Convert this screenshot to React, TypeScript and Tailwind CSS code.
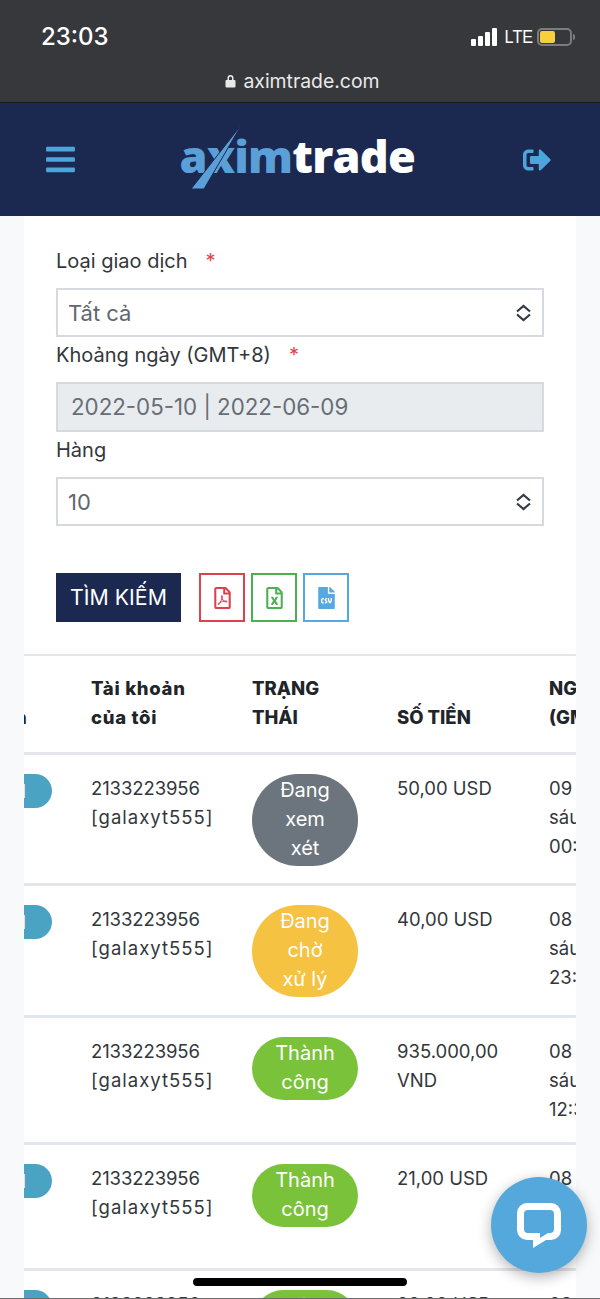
import { FaBars, FaFileCsv, FaRegFileExcel, FaRegFilePdf, FaSignOutAlt } from "react-icons/fa";

const rows = [
  { side: true, status: ["Đang", "xem", "xét"], color: "bg-[#6c757d]", amount: ["50,00 USD"], date: ["09 tháng", "sáu 2022", "00:12:41"], pad: "pb-[17px]" },
  { side: true, status: ["Đang", "chờ", "xử lý"], color: "bg-[#f5c242]", amount: ["40,00 USD"], date: ["08 tháng", "sáu 2022", "23:40:09"], pad: "pb-[18px]" },
  { side: false, status: ["Thành", "công"], color: "bg-[#7ac239]", amount: ["935.000,00", "VND"], date: ["08 tháng", "sáu 2022", "12:31:15"], pad: "pb-[18px]" },
  { side: true, status: ["Thành", "công"], color: "bg-[#7ac239]", amount: ["21,00 USD"], date: ["08 tháng", "sáu 2022", "10:05:33"], pad: "pb-[17px]" },
  { side: true, status: ["Thành", "công"], color: "bg-[#7ac239]", amount: ["20,00 USD"], date: ["08 tháng", "sáu 2022", "09:12:20"], pad: "pb-[17px]" },
];

const gridCols = "grid grid-cols-[67px_161px_145px_152px_100px]";

const StatusBar = () => (
  <div className="h-[103px] bg-[#37383c] border-b border-[#1a1a1c] flex flex-col text-white">
    <div className="flex items-center justify-between pt-[21px] pl-[41px] pr-[25px]">
      <span className="text-[24px] leading-[32px] font-medium">23:03</span>
      <div className="flex items-center">
        <div className="flex items-end gap-[2px] h-[18px]">
          <div className="w-[5px] h-[7px] bg-white rounded-[1px]"></div>
          <div className="w-[5px] h-[10px] bg-white rounded-[1px]"></div>
          <div className="w-[5px] h-[14px] bg-white rounded-[1px]"></div>
          <div className="w-[5px] h-[18px] bg-white rounded-[1px]"></div>
        </div>
        <span className="ml-[6px] text-[18px] leading-[18px] font-['Liberation_Sans',sans-serif] scale-x-90">LTE</span>
        <div className="ml-[2px] w-[35px] h-[18px] border-2 border-[#7b7c80] rounded-[5px] p-[1px]">
          <div className="w-[15px] h-full bg-[#f7d13d] rounded-[2px]"></div>
        </div>
        <div className="ml-[1px] w-[2px] h-[6px] bg-[#7b7c80] rounded-r-[2px]"></div>
      </div>
    </div>
    <div className="flex items-center justify-center mt-[16px] pl-[5px] gap-[7px] text-[#e9e9ea]">
      <svg width="11" height="14" viewBox="0 0 11 14" fill="currentColor">
        <path d="M2.5 6V4a3 3 0 0 1 6 0v2h1a1 1 0 0 1 1 1v5.5a1 1 0 0 1-1 1h-8a1 1 0 0 1-1-1V7a1 1 0 0 1 1-1zM4 6h3V4a1.5 1.5 0 0 0-3 0z" />
      </svg>
      <span className="text-[19.4px] leading-[24px]">aximtrade.com</span>
    </div>
  </div>
);

const Logo = () => (
  <div className="relative w-[236px] h-[66px]">
    <div className="absolute left-0 top-0 font-['Open_Sans',sans-serif] font-extrabold text-[45px] leading-[64px] tracking-[-0.8px] whitespace-nowrap">
      <span className="text-[#5a9fd8]">axim</span>
      <span className="text-white">trade</span>
    </div>
    <svg className="absolute left-0 top-0" width="80" height="66" viewBox="0 0 80 66">
      <path d="M62 0 L24 65 L11 65 Z" fill="#5a9fd8" stroke="#1b2850" strokeWidth="1" />
    </svg>
  </div>
);

const Header = () => (
  <div className="h-[113px] bg-[#1b2850] flex items-center justify-between pl-[46px] pr-[47px]">
    <FaBars className="text-[#4ea5dc] w-[29px] h-[33px]" />
    <div className="mt-[-6px] -ml-[1px]">
      <Logo />
    </div>
    <FaSignOutAlt className="text-[#4ea5dc] w-[32px] h-[28px]" />
  </div>
);

const Label = ({ text, star }: { text: string; star?: boolean }) => (
  <div className="pt-[1px] h-[29px] text-[20px] leading-[29px] text-[#33373b]">
    {text}
    {star && <span className="ml-[18px] text-[#e2424f]">*</span>}
  </div>
);

const SelectBox = ({ value }: { value: string }) => (
  <div className="h-[49px] border-2 border-[#d6d9dd] bg-white flex items-center justify-between pl-[10px] pr-[10px]">
    <span className="pt-[1px] text-[22px] text-[#5f676f]">{value}</span>
    <svg width="17" height="18" viewBox="0 0 17 18" fill="none" stroke="#343a40" strokeWidth="2.2">
      <path d="M2 7.5 L8.5 2 L15 7.5" />
      <path d="M2 10.5 L8.5 16 L15 10.5" />
    </svg>
  </div>
);

const Filters = () => (
  <div className="px-[32px] pt-[30px]">
    <Label text="Loại giao dịch" star />
    <div className="mt-[13px]">
      <SelectBox value="Tất cả" />
    </div>
    <div className="mt-[3px]">
      <Label text="Khoảng ngày (GMT+8)" star />
    </div>
    <div className="mt-[13px] h-[50px] border-2 border-[#d6d9dd] bg-[#e9ecef] flex items-center pl-[13px] text-[22.3px] text-[#666e76]">
      2022-05-10 | 2022-06-09
    </div>
    <div className="mt-[3px]">
      <Label text="Hàng" />
    </div>
    <div className="mt-[13px]">
      <SelectBox value="10" />
    </div>
    <div className="mt-[47px] flex items-center">
      <button className="w-[125px] h-[49px] bg-[#1b2850] text-white text-[21.3px]">TÌM KIẾM</button>
      <div className="ml-[18px] w-[46px] h-[49px] border-2 border-[#d9434e] flex items-center justify-center">
        <FaRegFilePdf className="text-[#d9434e] w-[17px] h-[22px]" />
      </div>
      <div className="ml-[6px] w-[46px] h-[49px] border-2 border-[#4caf50] flex items-center justify-center">
        <FaRegFileExcel className="text-[#4caf50] w-[17px] h-[22px]" />
      </div>
      <div className="ml-[6px] w-[46px] h-[49px] border-2 border-[#55a8e2] flex items-center justify-center">
        <FaFileCsv className="text-[#55a8e2] w-[17px] h-[22px]" />
      </div>
    </div>
  </div>
);

const Table = () => (
  <div className="mt-[32px] border-t-2 border-[#e3e6ea] overflow-hidden">
    <div className={`${gridCols} h-[96px] items-end pb-[20px] font-extrabold text-[18.5px] leading-[29px] text-[#212529] whitespace-nowrap`}>
      <div>
        <span className="block -ml-[9px]">n</span>
      </div>
      <div className="tracking-[0.7px]">
        Tài khoản
        <br />
        của tôi
      </div>
      <div>
        TRẠNG
        <br />
        THÁI
      </div>
      <div>SỐ TIỀN</div>
      <div>
        NGÀY
        <br />
        (GMT+8)
      </div>
    </div>
    {rows.map((row, i) => (
      <div
        key={i}
        className={`${gridCols} border-t-[3px] border-[#e3e6ea] pt-[19px] ${row.pad} items-start text-[18.5px] leading-[29px] text-[#33373b] whitespace-nowrap`}
      >
        <div>
          {row.side && (
            <div className="-ml-[30px] w-[58px] h-[34px] rounded-full bg-[#4ba3c3] text-white text-right pr-[26px] leading-[34px]">
              l
            </div>
          )}
        </div>
        <div>
          <div className="tracking-[-0.1px]">2133223956</div>
          <div className="tracking-[1px]">[galaxyt555]</div>
        </div>
        <div className={`w-[106px] rounded-full ${row.color} text-white text-center pt-[2px] pb-[3px] text-[20px]`}>
          {row.status.map((s) => (
            <div key={s}>{s}</div>
          ))}
        </div>
        <div>
          {row.amount.map((s) => (
            <div key={s}>{s}</div>
          ))}
        </div>
        <div>
          {row.date.map((s) => (
            <div key={s}>{s}</div>
          ))}
        </div>
      </div>
    ))}
  </div>
);

const ChatButton = () => (
  <div className="absolute left-[491px] top-[1177px] w-[96px] h-[96px] rounded-full bg-[#55a8dc] shadow-[0_4px_14px_rgba(0,0,0,0.3)] flex items-center justify-center">
    <svg width="46" height="46" viewBox="0 0 46 46">
      <path
        fillRule="evenodd"
        fill="#fff"
        d="M11 1h24a10 10 0 0 1 10 10v17a10 10 0 0 1-10 10h-5l-13 8v-8h-6a10 10 0 0 1-10-10V11a10 10 0 0 1 10-10zM12 8a4 4 0 0 0-4 4v15a4 4 0 0 0 4 4h12v5l8-5h2a4 4 0 0 0 4-4V12a4 4 0 0 0-4-4z"
      />
    </svg>
  </div>
);

const App = () => (
  <div className="relative w-[600px] h-[1299px] overflow-hidden bg-[#f8f9fa] font-['Inter',sans-serif]">
    <StatusBar />
    <Header />
    <div className="mx-[24px] bg-white">
      <Filters />
      <Table />
    </div>
    <ChatButton />
    <div className="absolute left-[193px] top-[1278px] w-[214px] h-[8px] rounded-full bg-black"></div>
    <div className="absolute left-0 bottom-0 w-full h-[1px] bg-[#6b6b6b]"></div>
  </div>
);

export default App;
